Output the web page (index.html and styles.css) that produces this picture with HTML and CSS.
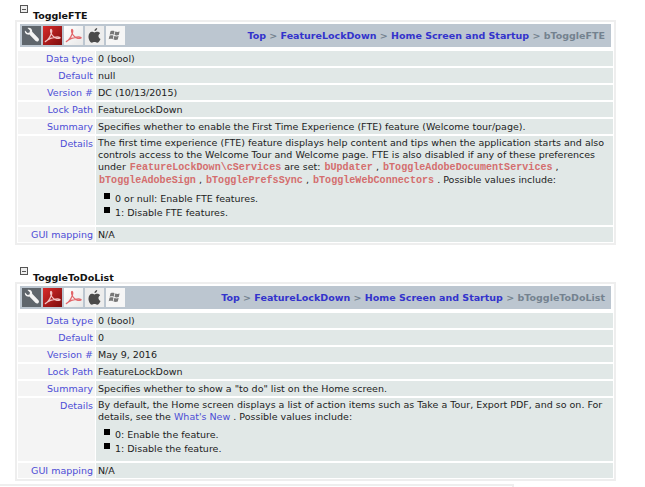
FILE: index.html
```html
<!DOCTYPE html>
<html lang="en">
<head>
<meta charset="utf-8">
<title>Preferences</title>
<link rel="stylesheet" href="styles.css">
</head>
<body>
<svg class="defs" width="0" height="0" aria-hidden="true">
  <symbol id="acro" viewBox="0 0 19 19">
    <path d="M2.500 15.500c2.500-1.500 4.500-4.500 5.800-8 .5-1.500.6-3.500-.1-4-.8-.3-.9 1.800-.2 3.500 1.200 2.800 3.300 4.800 5.800 5.300 1.600.3 3.400.2 3.400-.5 0-.8-2.200-1-4.500-.7-3.500.4-7 1.700-9.300 3.500-1 .8-1.400 1.200-.9.900z" fill="none" stroke="currentColor" stroke-width="1.200"/>
  </symbol>
</svg>

<section class="pref first">
  <h3 class="pref-title"><span class="toggle"></span>ToggleFTE</h3>
  <div class="pref-box">
    <div class="bar">
      <div class="icons">
        <span class="ico ico-tool"><svg viewBox="0 0 19 19" width="19" height="19"><path d="M3 4.500l2.500 2.500 2-.5.500-2-2.500-2.500c2.500-.8 5 1 4.700 3.800l6 6.200c1 1 1 2.200.2 3-.8.800-2 .8-3-.2l-6-6.200C4.200 9 2.300 6.800 3 4.500z" fill="#f4f4f4"/></svg></span>
        <span class="ico ico-red"><svg width="19" height="19"><use href="#acro"/></svg></span>
        <span class="ico ico-white"><svg width="19" height="19"><use href="#acro"/></svg></span>
        <span class="ico ico-apple"><svg viewBox="0 0 19 19" width="19" height="19"><path d="M12.200 2c.1 1.600-1.200 3-2.700 2.900C9.400 3.400 10.800 2.100 12.200 2zM6.800 5.700c1.200 0 1.900.7 2.700.7s1.500-.8 2.900-.7c1.100 0 2.100.5 2.700 1.500-2.400 1.500-2 4.700.4 5.700-.6 1.700-2 3.900-3.300 3.900-1.100 0-1.500-.7-2.700-.7s-1.700.7-2.700.7C5.200 16.800 3.500 13.500 3.500 10.800c0-3 1.600-5.100 3.300-5.100z" fill="#4a4a4a"/></svg></span>
        <span class="ico ico-win"><svg viewBox="0 0 19 19" width="19" height="19"><path d="M4.500 5.200c1.500-.6 2.700-.6 4 0l-.8 3.600c-1.300-.6-2.500-.6-4 0zM9.300 5.500c1.500.6 2.800.6 4.300 0l-.8 3.600c-1.500.6-2.800.6-4.300 0zM3.500 9.700c1.500-.6 2.700-.6 4 0l-.8 3.600c-1.300-.6-2.500-.6-4 0zM8.300 10c1.500.6 2.800.6 4.300 0l-.8 3.600c-1.500.6-2.800.6-4.300 0z" fill="#777"/></svg></span>
      </div>
      <nav class="crumbs"><a>Top</a> &gt; <a>FeatureLockDown</a> &gt; <a>Home Screen and Startup</a> &gt; bToggleFTE</nav>
    </div>
    <div class="row"><div class="key">Data type</div><div class="val">0 (bool)</div></div>
    <div class="row"><div class="key">Default</div><div class="val">null</div></div>
    <div class="row"><div class="key">Version #</div><div class="val">DC (10/13/2015)</div></div>
    <div class="row"><div class="key">Lock Path</div><div class="val">FeatureLockDown</div></div>
    <div class="row"><div class="key">Summary</div><div class="val">Specifies whether to enable the First Time Experience (FTE) feature (Welcome tour/page).</div></div>
    <div class="row"><div class="key">Details</div><div class="val">
      <p class="para">The first time experience (FTE) feature displays help content and tips when the application starts and also controls access to the Welcome Tour and Welcome page. FTE is also disabled if any of these preferences under <code>FeatureLockDown\cServices</code> are set: <code>bUpdater</code> , <code>bToggleAdobeDocumentServices</code> , <code>bToggleAdobeSign</code> , <code>bTogglePrefsSync</code> , <code>bToggleWebConnectors</code> . Possible values include:</p>
      <ul class="opts"><li>0 or null: Enable FTE features.</li><li>1: Disable FTE features.</li></ul>
    </div></div>
    <div class="row"><div class="key">GUI mapping</div><div class="val">N/A</div></div>
  </div>
</section>

<section class="pref second">
  <h3 class="pref-title"><span class="toggle"></span>ToggleToDoList</h3>
  <div class="pref-box">
    <div class="bar">
      <div class="icons">
        <span class="ico ico-tool"><svg viewBox="0 0 19 19" width="19" height="19"><path d="M3 4.500l2.500 2.500 2-.5.500-2-2.500-2.500c2.500-.8 5 1 4.700 3.800l6 6.200c1 1 1 2.200.2 3-.8.800-2 .8-3-.2l-6-6.200C4.200 9 2.300 6.800 3 4.500z" fill="#f4f4f4"/></svg></span>
        <span class="ico ico-red"><svg width="19" height="19"><use href="#acro"/></svg></span>
        <span class="ico ico-white"><svg width="19" height="19"><use href="#acro"/></svg></span>
        <span class="ico ico-apple"><svg viewBox="0 0 19 19" width="19" height="19"><path d="M12.200 2c.1 1.600-1.200 3-2.700 2.900C9.400 3.400 10.800 2.100 12.200 2zM6.800 5.700c1.200 0 1.900.7 2.700.7s1.500-.8 2.900-.7c1.100 0 2.100.5 2.700 1.500-2.400 1.500-2 4.700.4 5.700-.6 1.700-2 3.900-3.300 3.900-1.100 0-1.500-.7-2.700-.7s-1.700.7-2.700.7C5.200 16.800 3.500 13.500 3.500 10.800c0-3 1.600-5.100 3.300-5.100z" fill="#4a4a4a"/></svg></span>
        <span class="ico ico-win"><svg viewBox="0 0 19 19" width="19" height="19"><path d="M4.500 5.200c1.500-.6 2.700-.6 4 0l-.8 3.600c-1.300-.6-2.500-.6-4 0zM9.300 5.500c1.500.6 2.800.6 4.300 0l-.8 3.600c-1.500.6-2.800.6-4.300 0zM3.500 9.700c1.500-.6 2.700-.6 4 0l-.8 3.600c-1.300-.6-2.500-.6-4 0zM8.300 10c1.500.6 2.800.6 4.300 0l-.8 3.600c-1.500.6-2.800.6-4.300 0z" fill="#777"/></svg></span>
      </div>
      <nav class="crumbs"><a>Top</a> &gt; <a>FeatureLockDown</a> &gt; <a>Home Screen and Startup</a> &gt; bToggleToDoList</nav>
    </div>
    <div class="row"><div class="key">Data type</div><div class="val">0 (bool)</div></div>
    <div class="row"><div class="key">Default</div><div class="val">0</div></div>
    <div class="row"><div class="key">Version #</div><div class="val">May 9, 2016</div></div>
    <div class="row"><div class="key">Lock Path</div><div class="val">FeatureLockDown</div></div>
    <div class="row"><div class="key">Summary</div><div class="val">Specifies whether to show a "to do" list on the Home screen.</div></div>
    <div class="row"><div class="key">Details</div><div class="val">
      <p class="para">By default, the Home screen displays a list of action items such as Take a Tour, Export PDF, and so on. For details, see the <a class="link">What's New</a> . Possible values include:</p>
      <ul class="opts"><li>0: Enable the feature.</li><li>1: Disable the feature.</li></ul>
    </div></div>
    <div class="row"><div class="key">GUI mapping</div><div class="val">N/A</div></div>
  </div>
</section>

<div class="next-box"></div>
</body>
</html>
```
FILE: styles.css
```css
* { box-sizing: border-box; }
html, body { margin: 0; padding: 0; }
body {
  width: 645px;
  height: 487px;
  overflow: hidden;
  background: #fff;
  font-family: "DejaVu Sans", Verdana, sans-serif;
  font-size: 9.5px;
  color: #1c1c1c;
  padding: 5px 0 0 15px;
}
.defs { position: absolute; }
.pref { width: 601px; }
.second { margin-top: 22px; }
.pref-title {
  display: flex;
  margin: 0;
  height: 15px;
  padding: 3px 0 0 18px;
  line-height: 15px;
  font-size: 9.5px;
  font-weight: bold;
  color: #111;
  position: relative;
}
.toggle {
  width: 8px;
  height: 8px;
  border: 1px solid #555;
  background: linear-gradient(#555, #555) center / 4px 1px no-repeat #eee;
  position: absolute;
  left: 5px;
  top: 0;
}
.pref-box {
  border: 2px solid #eee;
  padding: 2px 1px 1px;
  display: flex;
  flex-direction: column;
  gap: 2px;
  background: #fff;
}
.bar {
  margin: 0 2px 2px;
  height: 23px;
  background: #bcc6d0;
  display: flex;
  align-items: center;
  justify-content: space-between;
  padding: 0 6px 0 2px;
}
.icons { display: flex; gap: 2px; }
.ico { width: 19px; height: 19px; display: block; }
.ico svg { display: block; }
.ico-tool { background: #5f666c; }
.ico-red { background: linear-gradient(135deg, #d92a2a, #7c0d0d); color: #f2c4c4; }
.ico-white { background: linear-gradient(135deg, #fff, #e8e8e8); color: #e2666a; }
.ico-apple { background: #ededed; }
.ico-win { background: #f6f6f6; }
.crumbs { font-weight: bold; color: #74828f; white-space: nowrap; }
.crumbs a { color: #3333cc; }
.row { display: grid; grid-template-columns: 77px 1fr; gap: 1px; }
.key {
  background: #f4f4f4;
  color: #4d4dd6;
  text-align: right;
  padding: 1px 2px 1px 0;
  line-height: 13px;
}
.val {
  background: #e1e8e7;
  padding: 1px 2px;
  line-height: 13px;
  min-height: 15px;
}
.para { margin: 0; line-height: 12px; }
code {
  font-family: "Liberation Mono", "Courier New", monospace;
  font-size: 10.1px;
  line-height: 12px;
  font-weight: bold;
  color: #d46e6e;
  padding-left: 1px;
}
.link { color: #4d4dd6; }
.opts {
  list-style: none;
  margin: 5px 0 4px;
  padding: 0 0 0 6px;
}
.opts li {
  position: relative;
  padding-left: 11px;
  line-height: 14px;
}
.opts li::before {
  content: "";
  position: absolute;
  left: 0;
  top: 1px;
  width: 6px;
  height: 6px;
  background: #000;
}
.next-box {
  position: absolute;
  left: 0;
  top: 484px;
  width: 514px;
  height: 3px;
  border-top: 2px solid #eee;
  border-right: 2px solid #eee;
  background: #fff;
}
```
